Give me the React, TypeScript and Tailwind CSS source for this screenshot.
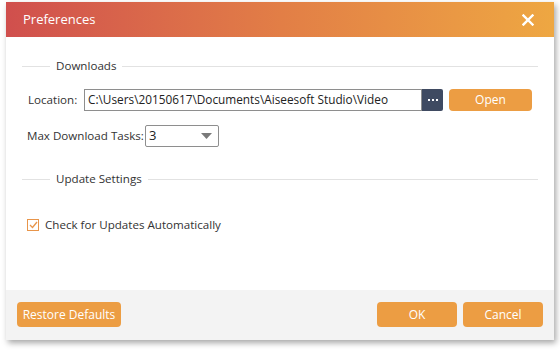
import React from "react";

const font = { fontFamily: '"Open Sans", "Noto Sans", sans-serif' };

function SectionHeader({ title }: { title: string }) {
  return (
    <div className="flex items-center gap-[6px] h-[16px]">
      <div className="w-[28px] h-px bg-[#e2e2e2]" />
      <span className="text-[11.6px] text-[#333]">{title}</span>
      <div className="flex-1 h-px bg-[#e2e2e2]" />
    </div>
  );
}

export default function App() {
  return (
    <div className="w-[560px] h-[350px] bg-white pl-[6px] pt-[2px]" style={font}>
      <div className="w-[548px] h-[338px] flex flex-col bg-white shadow-[2px_3px_6px_rgba(0,0,0,0.35)]">
        {/* title bar */}
        <div className="h-[35px] flex items-center justify-between pl-[17px] pr-[20px] bg-gradient-to-r from-[#d04f4d] via-[#e27e46] to-[#eea742]">
          <span className="text-white text-[13px]">Preferences</span>
          <svg width="12" height="12" viewBox="0 0 12 12">
            <path d="M1.5 1.5 L10.5 10.5 M10.5 1.5 L1.5 10.5" stroke="white" strokeWidth="2.4" strokeLinecap="square" />
          </svg>
        </div>

        {/* body */}
        <div className="flex-1 flex flex-col pl-[16px] pr-[16px] pt-[21px] text-[11.6px] text-[#333]">
          <SectionHeader title="Downloads" />

          <div className="flex items-center mt-[15px] pl-[6px] h-[22px]">
            <span className="w-[56px]">Location:</span>
            <div className="w-[338px] h-[22px] border border-[#8e8e8e] flex items-center pl-[3px] text-[11.8px] text-[#222]">
              C:\Users\20150617\Documents\Aiseesoft Studio\Video
            </div>
            <div className="w-[21px] h-[22px] bg-[#3f4a61] rounded-r-[2px] flex items-center justify-center gap-[2px]">
              <span className="w-[2px] h-[2px] bg-white" />
              <span className="w-[2px] h-[2px] bg-white" />
              <span className="w-[2px] h-[2px] bg-white" />
            </div>
            <button className="ml-[6px] w-[83px] h-[22px] rounded-[4px] bg-[#ec9d43] text-white text-[12px]">
              Open
            </button>
          </div>

          <div className="flex items-center mt-[14px] pl-[5px] h-[22px]">
            <span>Max Download Tasks:</span>
            <div className="ml-[1px] w-[74px] h-[22px] border border-[#8e8e8e] rounded-[2px] flex items-center justify-between pl-[3px] pr-[6px]">
              <span className="text-[13px] text-[#222]">3</span>
              <svg width="11" height="6" viewBox="0 0 11 6">
                <path d="M0 0 H11 L5.5 6 Z" fill="#7a7a7a" />
              </svg>
            </div>
          </div>

          <div className="mt-[24px]">
            <SectionHeader title="Update Settings" />
          </div>

          <label className="flex items-center gap-[6px] mt-[29px] pl-[5px]">
            <span className="w-[12px] h-[12px] border border-[#e8954a] flex items-center justify-center">
              <svg width="9" height="8" viewBox="0 0 9 8">
                <path d="M1 4 L3.5 6.5 L8 1" stroke="#e8954a" strokeWidth="1.3" fill="none" />
              </svg>
            </span>
            <span>Check for Updates Automatically</span>
          </label>
        </div>

        {/* footer */}
        <div className="h-[50px] bg-[#f3f3f3] flex items-start pt-[12px] pl-[11px] pr-[11px] gap-[6px]">
          <button className="w-[104px] h-[25px] rounded-[4px] bg-[#ec9d43] text-white text-[12px]">
            Restore Defaults
          </button>
          <div className="flex-1" />
          <button className="w-[80px] h-[25px] rounded-[4px] bg-[#ec9d43] text-white text-[12px]">OK</button>
          <button className="w-[80px] h-[25px] rounded-[4px] bg-[#ec9d43] text-white text-[12px]">Cancel</button>
        </div>
      </div>
    </div>
  );
}
